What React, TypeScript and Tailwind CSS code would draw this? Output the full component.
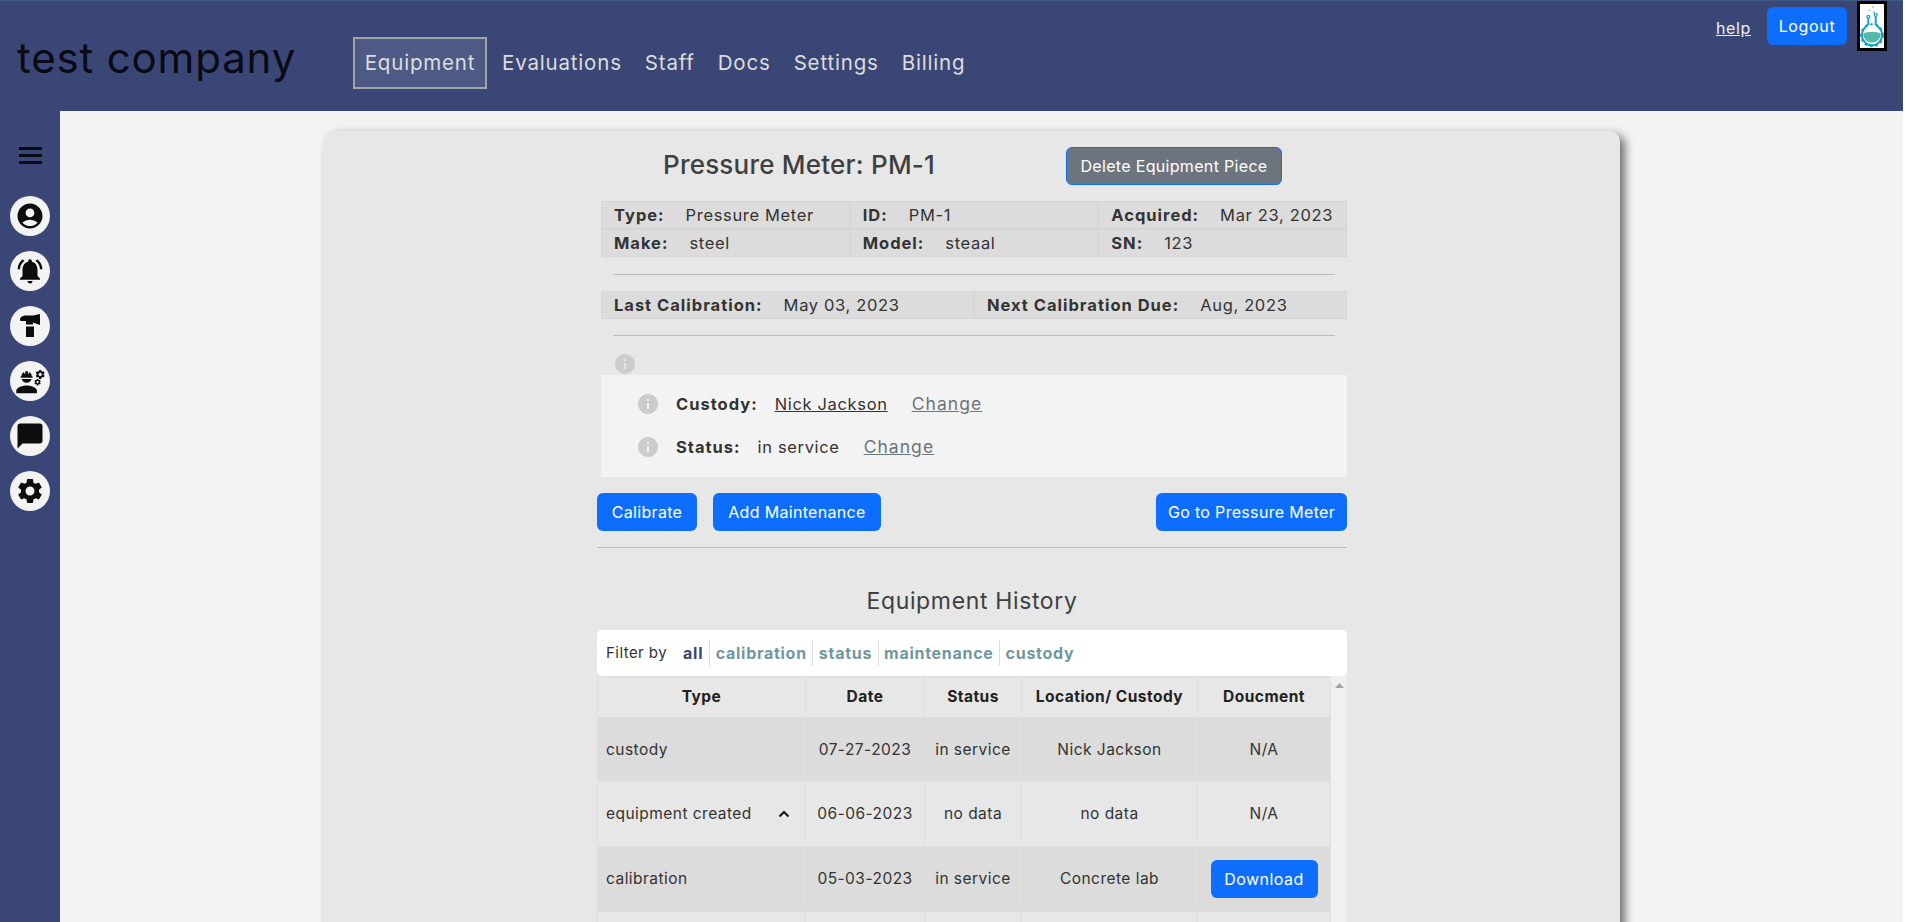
import {
  MdAccountCircle,
  MdChatBubble,
  MdEngineering,
  MdInfo,
  MdNotificationsActive,
  MdSettings,
} from "react-icons/md";

const navItems = ["Evaluations", "Staff", "Docs", "Settings", "Billing"];

const filters = ["calibration", "status", "maintenance", "custody"];

const historyRows = [
  { type: "custody", date: "07-27-2023", status: "in service", location: "Nick Jackson", doc: "N/A" },
  { type: "equipment created", date: "06-06-2023", status: "no data", location: "no data", doc: "N/A", open: true },
  { type: "calibration", date: "05-03-2023", status: "in service", location: "Concrete lab", doc: "Download" },
  { type: "", date: "", status: "", location: "", doc: "" },
];

function HammerIcon() {
  return (
    <svg width="24" height="24" viewBox="0 0 24 24" fill="#0d0d0d" aria-hidden>
      <path d="M2 6C2 3 4.5 1.5 8 1.5H15L22 0V11L15 8.5V10.5H8V7H4.5C3 7 2 7 2 6Z" />
      <rect x="8" y="12.5" width="8" height="10.5" />
    </svg>
  );
}

function FlaskLogo() {
  return (
    <svg width="24" height="44" viewBox="0 0 26 46" fill="none" aria-hidden>
      <circle cx="14" cy="2.5" r="1" fill="#7cc9d6" />
      <circle cx="10" cy="6" r="1" fill="#7cc9d6" />
      <circle cx="15" cy="8" r="1.2" fill="#7cc9d6" />
      <circle cx="9" cy="13" r="1.6" stroke="#1aa3c8" strokeWidth="1.4" />
      <circle cx="17" cy="11" r="1.6" stroke="#1aa3c8" strokeWidth="1.4" />
      <path d="M9 15V21L4 26.5A11 11 0 1 0 22 26.5L17 21V13" stroke="#1aa3c8" strokeWidth="2.2" />
      <path d="M3.5 31C8 29 18 29 22.5 31C22.5 37 18 41 13 41C8 41 3.5 37 3.5 31Z" fill="#55b9ab" />
      <circle cx="13" cy="33" r="12" stroke="#1aa3c8" strokeWidth="2" strokeDasharray="3 3" />
    </svg>
  );
}

function ChevronUp() {
  return (
    <svg width="12" height="8" viewBox="0 0 12 8" fill="none" aria-hidden className="mr-[5px]">
      <path d="M1.5 6.5L6 2L10.5 6.5" stroke="#111111" strokeWidth="2" />
    </svg>
  );
}

function InfoIcon() {
  return <MdInfo size={24} className="text-[#cccccc] -m-0.5" />;
}

function SideButton({ children }: { children: React.ReactNode }) {
  return (
    <div className="w-10 h-10 rounded-full bg-[#f3f3f3] text-[#0d0d0d] flex items-center justify-center">
      {children}
    </div>
  );
}

function Pair({ label, value }: { label: string; value: string }) {
  return (
    <div className="h-[28px] pl-[12px] flex items-center gap-[21px] bg-[#dcdcdc] border border-[#d6d6d6] whitespace-nowrap">
      <b className="font-bold tracking-[0.06em]">{label}</b>
      <span>{value}</span>
    </div>
  );
}

export default function App() {
  return (
    <div
      className="w-[1903px] h-[922px] overflow-hidden bg-[#f3f3f3] text-[#333333] text-[16.5px] tracking-[0.04em]"
      style={{ fontFamily: "Inter, sans-serif" }}
    >
      {/* Top bar */}
      <header className="h-[111px] bg-[#3a4776] border-t border-[#3f5a80] flex items-start">
        <h1 className="w-[353px] pl-[17px] pt-[31px] text-[42px] leading-[52px] text-[#0a0a14] tracking-[0.02em] whitespace-nowrap">
          test company
        </h1>
        <nav className="mt-[36px] flex items-center text-[20.5px] tracking-[0.04em] text-[#dddddd]">
          <a className="h-[52px] w-[134px] flex items-center justify-center border-2 border-[#a3a3a3] bg-[#4c5a85]">
            Equipment
          </a>
          <div className="flex ml-[15px] gap-[23px]">
            {navItems.map((item) => (
              <a key={item}>{item}</a>
            ))}
          </div>
        </nav>
        <div className="ml-auto mr-[16px] flex items-start">
          <a className="mt-[15px] underline text-[#eeeeff] text-[16px]">help</a>
          <button className="ml-[16px] mt-[6px] h-[38px] w-[80px] rounded-md bg-[#0d6efd] text-white text-[16px]">Logout</button>
          <div className="ml-[10px] h-[50px] w-[30px] bg-white border-[3px] border-black flex items-center justify-center overflow-hidden">
            <FlaskLogo />
          </div>
        </div>
      </header>

      <div className="flex">
        {/* Side rail */}
        <aside className="w-[60px] h-[811px] shrink-0 bg-[#3a4776] flex flex-col items-center">
          <div className="mt-[36px] mb-[32px] w-[23px] flex flex-col gap-[4px]">
            <span className="h-[3px] bg-[#0a0a14]" />
            <span className="h-[3px] bg-[#0a0a14]" />
            <span className="h-[3px] bg-[#0a0a14]" />
          </div>
          <div className="flex flex-col gap-[15px]">
            <SideButton><MdAccountCircle size={30} /></SideButton>
            <SideButton><MdNotificationsActive size={30} /></SideButton>
            <SideButton><HammerIcon /></SideButton>
            <SideButton><MdEngineering size={31} /></SideButton>
            <SideButton><MdChatBubble size={30} /></SideButton>
            <SideButton><MdSettings size={30} /></SideButton>
          </div>
        </aside>

        {/* Equipment card */}
        <main className="flex-1 pt-[20px] pl-[264px]">
          <section className="w-[1296px] h-[900px] rounded-[10px] bg-[#e7e7e7] shadow-[5px_4px_10px_rgba(0,0,0,0.55)] pt-[16px]">
            <div className="w-[750px] mx-auto">
              <div className="grid grid-cols-[469px_auto] items-center">
                <h2 className="pl-[66px] pb-[2px] text-[26px] leading-[34px] font-medium text-[#3f3f3f] tracking-[0.008em] whitespace-nowrap">
                  Pressure Meter: PM-1
                </h2>
                <button className="h-[38px] w-[216px] rounded-md bg-[#6c757d] border border-[#0d6efd] text-white text-[16px] tracking-[0.02em] whitespace-nowrap">
                  Delete Equipment Piece
                </button>
              </div>

              <div className="mt-[16px] ml-[4px] grid grid-cols-3">
                <Pair label="Type:" value="Pressure Meter" />
                <Pair label="ID:" value="PM-1" />
                <Pair label="Acquired:" value="Mar 23, 2023" />
                <Pair label="Make:" value="steel" />
                <Pair label="Model:" value="steaal" />
                <Pair label="SN:" value="123" />
              </div>
              <div className="mt-[17px] ml-[16px] mr-[12px] h-px bg-[#bdbdbd]" />

              <div className="mt-[16px] ml-[4px] grid grid-cols-2">
                <Pair label="Last Calibration:" value="May 03, 2023" />
                <Pair label="Next Calibration Due:" value="Aug, 2023" />
              </div>
              <div className="mt-[16px] ml-[16px] mr-[12px] h-px bg-[#bdbdbd]" />

              <div className="mt-[18px] ml-[18px] h-[20px] w-[20px]">
                <InfoIcon />
              </div>

              <div className="mt-[3px] ml-[4px] h-[102px] bg-[#f3f3f3] pt-[19px] pl-[37px] flex flex-col gap-[23px]">
                <div className="flex items-center h-[20px] whitespace-nowrap">
                  <InfoIcon />
                  <b className="ml-[18px] font-bold tracking-[0.06em]">Custody:</b>
                  <a className="ml-[17px] underline">Nick Jackson</a>
                  <a className="ml-[24px] underline text-[#6c757d] text-[17.5px] tracking-[0.06em]">Change</a>
                </div>
                <div className="flex items-center h-[20px] whitespace-nowrap">
                  <InfoIcon />
                  <b className="ml-[18px] font-bold tracking-[0.06em]">Status:</b>
                  <span className="ml-[17px]">in service</span>
                  <a className="ml-[24px] underline text-[#6c757d] text-[17.5px] tracking-[0.06em]">Change</a>
                </div>
              </div>

              <div className="mt-[16px] flex text-[16px] tracking-[0.02em]">
                <button className="h-[38px] w-[100px] rounded-md bg-[#0d6efd] text-white">Calibrate</button>
                <button className="ml-[16px] h-[38px] w-[168px] rounded-md bg-[#0d6efd] text-white whitespace-nowrap">Add Maintenance</button>
                <button className="ml-auto h-[38px] w-[191px] rounded-md bg-[#0d6efd] text-white whitespace-nowrap">Go to Pressure Meter</button>
              </div>
              <div className="mt-[16px] h-px bg-[#bdbdbd]" />

              <h3 className="mt-[37px] text-center text-[23px] leading-[32px] font-normal text-[#3f3f3f] tracking-[0.028em]">
                Equipment History
              </h3>

              <div className="mt-[13px] h-[46px] rounded-[5px] bg-white flex items-center pl-[9px] text-[16px] tracking-[0.045em] whitespace-nowrap">
                <span className="text-[15px] tracking-[0.03em]">Filter by</span>
                <b className="ml-[16px] pr-[6px] h-[26px] leading-[26px] border-r border-[#dddddd] text-[#3a4776] font-bold">all</b>
                {filters.map((f) => (
                  <b key={f} className="px-[5.5px] h-[26px] leading-[26px] border-r border-[#dddddd] last:border-0 text-[#7097a0] font-bold">
                    {f}
                  </b>
                ))}
              </div>

              <div className="flex">
                <table className="w-[733px] table-fixed border-collapse text-[15.5px] tracking-[0.03em]">
                  <colgroup>
                    <col className="w-[208px]" />
                    <col className="w-[119px]" />
                    <col className="w-[97px]" />
                    <col className="w-[176px]" />
                    <col className="w-[133px]" />
                  </colgroup>
                  <thead>
                    <tr className="h-[41px] text-[#222222]">
                      <th className="font-bold border border-[#dedede]">Type</th>
                      <th className="font-bold border border-[#dedede]">Date</th>
                      <th className="font-bold border border-[#dedede]">Status</th>
                      <th className="font-bold border border-[#dedede] whitespace-nowrap">Location/ Custody</th>
                      <th className="font-bold border border-[#dedede]">Doucment</th>
                    </tr>
                  </thead>
                  <tbody>
                    {historyRows.map((row, i) => (
                      <tr key={i} className={`${i === 0 ? "h-[64px]" : "h-[65px]"} ${i % 2 === 0 ? "bg-[#dcdcdc]" : "bg-[#e7e7e7]"}`}>
                        <td className="border border-[#e0e0e0] pl-[8px]">
                          <div className="flex items-center justify-between pr-[10px] whitespace-nowrap">
                            {row.type}
                            {row.open && <ChevronUp />}
                          </div>
                        </td>
                        <td className="border border-[#e0e0e0] text-center whitespace-nowrap">{row.date}</td>
                        <td className="border border-[#e0e0e0] text-center whitespace-nowrap">{row.status}</td>
                        <td className="border border-[#e0e0e0] text-center whitespace-nowrap">{row.location}</td>
                        <td className="border border-[#e0e0e0] text-center">
                          {row.doc === "Download" ? (
                            <button className="h-[38px] w-[107px] rounded-md bg-[#0d6efd] text-white text-[16px]">Download</button>
                          ) : (
                            row.doc
                          )}
                        </td>
                      </tr>
                    ))}
                  </tbody>
                </table>
                {/* table scrollbar */}
                <div className="w-[17px] bg-[#f0f0f0] flex justify-center pt-[7px]">
                  <svg width="9" height="5" viewBox="0 0 9 5" aria-hidden>
                    <path d="M4.5 0L9 5H0Z" fill="#a3a3a3" />
                  </svg>
                </div>
              </div>
            </div>
          </section>
        </main>
      </div>
    </div>
  );
}
